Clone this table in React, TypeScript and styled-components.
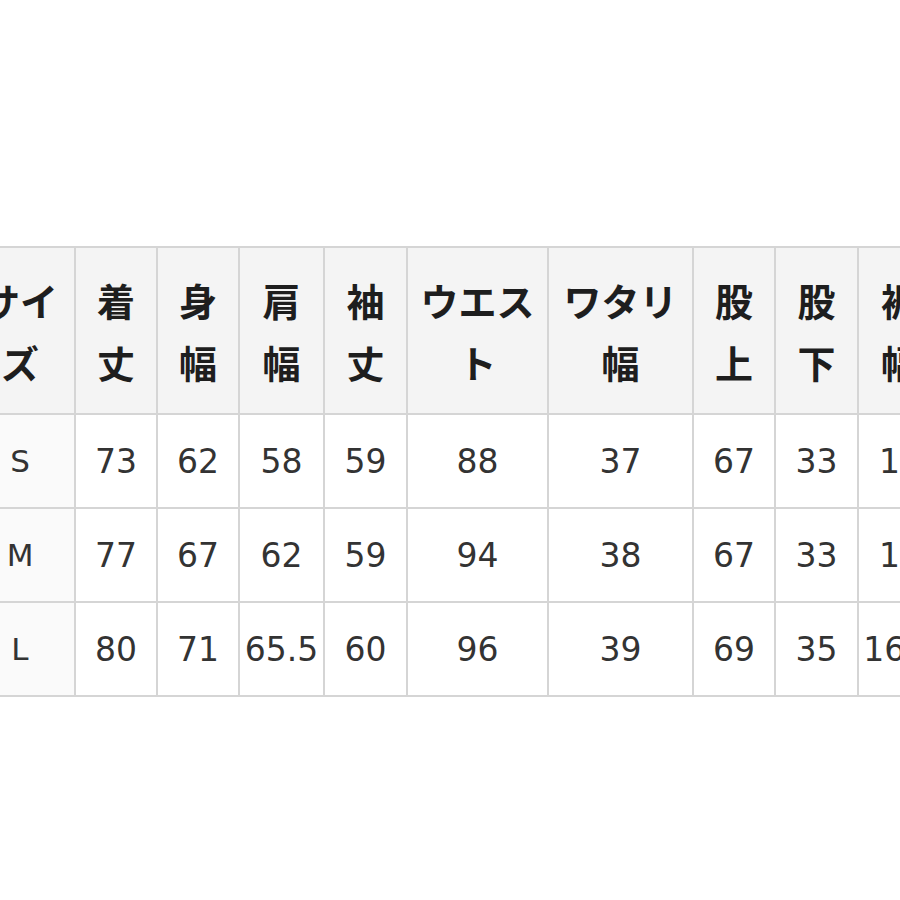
import React from 'react';
import styled, { createGlobalStyle } from 'styled-components';

const GlobalStyle = createGlobalStyle`
  html, body {
    margin: 0;
    padding: 0;
    background: #ffffff;
    overflow: hidden;
  }
`;

const Page = styled.main`
  width: 900px;
  height: 900px;
  padding-top: 246px;
  box-sizing: border-box;
  overflow: hidden;
`;

const SizeTable = styled.table`
  margin-left: -36px;
  border-collapse: collapse;
  table-layout: fixed;
  width: 977px;
`;

const HeadCell = styled.th`
  height: 165px;
  padding: 0 6px;
  background: #f4f4f4;
  border: 2px solid #d5d5d5;
  font-family: 'Noto Sans CJK JP', 'Noto Sans', sans-serif;
  font-size: 38px;
  font-weight: 700;
  line-height: 62px;
  color: #1e1e1e;
  text-align: center;
  vertical-align: middle;
  white-space: nowrap;
`;

const Cell = styled.td<{ $label?: boolean }>`
  height: 92px;
  padding: 0;
  background: ${({ $label }) => ($label ? '#fafafa' : '#ffffff')};
  border: 2px solid #d5d5d5;
  font-family: 'DejaVu Sans', Verdana, sans-serif;
  font-size: ${({ $label }) => ($label ? '31px' : '33px')};
  color: #333333;
  text-align: center;
  vertical-align: middle;
  white-space: nowrap;
`;

const widths = [110, 82, 82, 85, 83, 141, 145, 82, 83, 84];

const headers: string[][] = [
  ['サイ', 'ズ'],
  ['着', '丈'],
  ['身', '幅'],
  ['肩', '幅'],
  ['袖', '丈'],
  ['ウエス', 'ト'],
  ['ワタリ', '幅'],
  ['股', '上'],
  ['股', '下'],
  ['裾', '幅'],
];

const rows = [
  ['S', '73', '62', '58', '59', '88', '37', '67', '33', '14'],
  ['M', '77', '67', '62', '59', '94', '38', '67', '33', '15'],
  ['L', '80', '71', '65.5', '60', '96', '39', '69', '35', '16.5'],
];

export default function App() {
  return (
    <Page>
      <GlobalStyle />
      <SizeTable>
        <colgroup>
          {widths.map((w, i) => (
            <col key={i} style={{ width: w }} />
          ))}
        </colgroup>
        <thead>
          <tr>
            {headers.map((lines, i) => (
              <HeadCell key={i}>
                {lines.map((line, j) => (
                  <React.Fragment key={j}>
                    {j > 0 && <br />}
                    {line}
                  </React.Fragment>
                ))}
              </HeadCell>
            ))}
          </tr>
        </thead>
        <tbody>
          {rows.map((row) => (
            <tr key={row[0]}>
              {row.map((value, i) => (
                <Cell key={i} $label={i === 0}>
                  {value}
                </Cell>
              ))}
            </tr>
          ))}
        </tbody>
      </SizeTable>
    </Page>
  );
}
